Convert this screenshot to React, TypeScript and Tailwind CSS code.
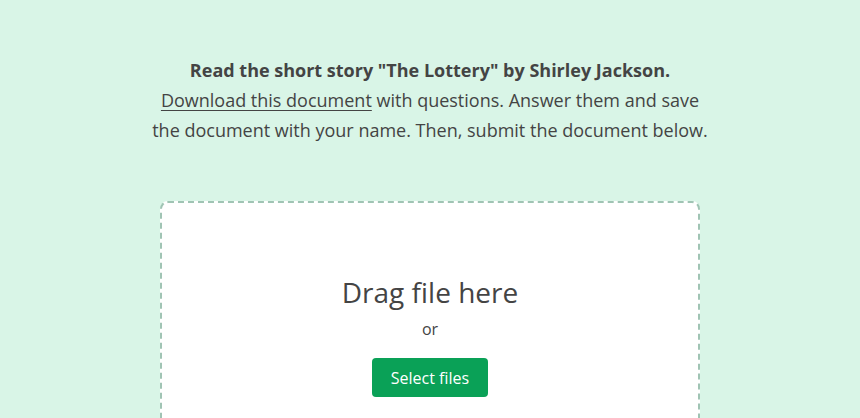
export default function App() {
  return (
    <div className="h-[418px] overflow-hidden bg-[#d9f5e7] pt-[55px] text-[#444444]" style={{ fontFamily: '"Open Sans", sans-serif' }}>
      <div className="mx-auto w-[560px] text-center text-[18px] leading-[30px]">
        <p className="font-bold">Read the short story "The Lottery" by Shirley Jackson.</p>
        <p>
          <a href="#" className="underline underline-offset-[3px] decoration-1">Download this document</a> with questions. Answer them and save the document with your name. Then, submit the document below.
        </p>
      </div>
      <div className="mx-auto mt-[56px] h-[240px] w-[540px] rounded-[8px] border-2 border-dashed border-[#a0c4b4] bg-white pt-[69px] text-center">
        <div className="text-[28px] leading-[40px]">Drag file here</div>
        <div className="mt-[5px] text-[16px] leading-[24px]">or</div>
        <button className="mt-[17px] h-[39px] w-[116px] rounded-[4px] bg-[#0aa157] text-[16px] text-white">Select files</button>
      </div>
    </div>
  );
}
